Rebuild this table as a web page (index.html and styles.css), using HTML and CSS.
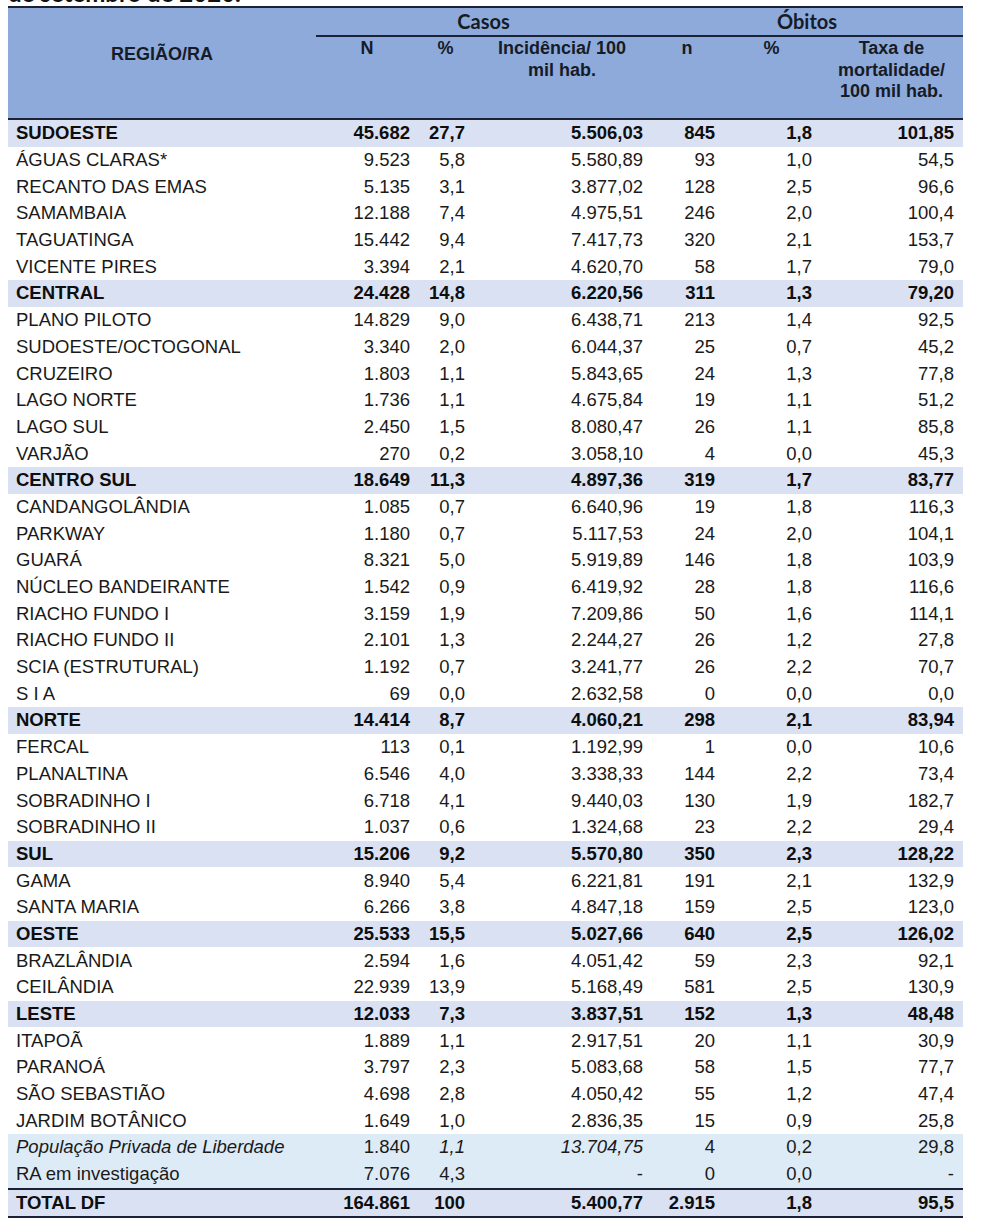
FILE: index.html
```html
<!DOCTYPE html>
<html lang="pt-BR">
<head>
<meta charset="utf-8">
<title>Casos e óbitos por região</title>
<link rel="stylesheet" href="styles.css">
</head>
<body>
<div class="caption">de setembro de 2020.</div>
<table class="tbl">
<colgroup>
<col class="c1"><col class="c2"><col class="c3"><col class="c4"><col class="c5"><col class="c6"><col class="c7">
</colgroup>
<thead>
<tr class="h1">
<th rowspan="2" class="region">REGIÃO/RA</th>
<th colspan="3" class="grp">Casos</th>
<th colspan="3" class="grp">Óbitos</th>
</tr>
<tr class="h2">
<th class="sub">N</th>
<th class="sub">%</th>
<th class="sub">Incidência/ 100<br>mil hab.</th>
<th class="sub">n</th>
<th class="sub">%</th>
<th class="sub">Taxa de<br>mortalidade/<br>100 mil hab.</th>
</tr>
</thead>
<tbody>
<tr class="r g"><td>SUDOESTE</td><td>45.682</td><td>27,7</td><td>5.506,03</td><td>845</td><td>1,8</td><td>101,85</td></tr>
<tr class="r"><td>ÁGUAS CLARAS*</td><td>9.523</td><td>5,8</td><td>5.580,89</td><td>93</td><td>1,0</td><td>54,5</td></tr>
<tr class="r"><td>RECANTO DAS EMAS</td><td>5.135</td><td>3,1</td><td>3.877,02</td><td>128</td><td>2,5</td><td>96,6</td></tr>
<tr class="r"><td>SAMAMBAIA</td><td>12.188</td><td>7,4</td><td>4.975,51</td><td>246</td><td>2,0</td><td>100,4</td></tr>
<tr class="r"><td>TAGUATINGA</td><td>15.442</td><td>9,4</td><td>7.417,73</td><td>320</td><td>2,1</td><td>153,7</td></tr>
<tr class="r"><td>VICENTE PIRES</td><td>3.394</td><td>2,1</td><td>4.620,70</td><td>58</td><td>1,7</td><td>79,0</td></tr>
<tr class="r g"><td>CENTRAL</td><td>24.428</td><td>14,8</td><td>6.220,56</td><td>311</td><td>1,3</td><td>79,20</td></tr>
<tr class="r"><td>PLANO PILOTO</td><td>14.829</td><td>9,0</td><td>6.438,71</td><td>213</td><td>1,4</td><td>92,5</td></tr>
<tr class="r"><td>SUDOESTE/OCTOGONAL</td><td>3.340</td><td>2,0</td><td>6.044,37</td><td>25</td><td>0,7</td><td>45,2</td></tr>
<tr class="r"><td>CRUZEIRO</td><td>1.803</td><td>1,1</td><td>5.843,65</td><td>24</td><td>1,3</td><td>77,8</td></tr>
<tr class="r"><td>LAGO NORTE</td><td>1.736</td><td>1,1</td><td>4.675,84</td><td>19</td><td>1,1</td><td>51,2</td></tr>
<tr class="r"><td>LAGO SUL</td><td>2.450</td><td>1,5</td><td>8.080,47</td><td>26</td><td>1,1</td><td>85,8</td></tr>
<tr class="r"><td>VARJÃO</td><td>270</td><td>0,2</td><td>3.058,10</td><td>4</td><td>0,0</td><td>45,3</td></tr>
<tr class="r g"><td>CENTRO SUL</td><td>18.649</td><td>11,3</td><td>4.897,36</td><td>319</td><td>1,7</td><td>83,77</td></tr>
<tr class="r"><td>CANDANGOLÂNDIA</td><td>1.085</td><td>0,7</td><td>6.640,96</td><td>19</td><td>1,8</td><td>116,3</td></tr>
<tr class="r"><td>PARKWAY</td><td>1.180</td><td>0,7</td><td>5.117,53</td><td>24</td><td>2,0</td><td>104,1</td></tr>
<tr class="r"><td>GUARÁ</td><td>8.321</td><td>5,0</td><td>5.919,89</td><td>146</td><td>1,8</td><td>103,9</td></tr>
<tr class="r"><td>NÚCLEO BANDEIRANTE</td><td>1.542</td><td>0,9</td><td>6.419,92</td><td>28</td><td>1,8</td><td>116,6</td></tr>
<tr class="r"><td>RIACHO FUNDO I</td><td>3.159</td><td>1,9</td><td>7.209,86</td><td>50</td><td>1,6</td><td>114,1</td></tr>
<tr class="r"><td>RIACHO FUNDO II</td><td>2.101</td><td>1,3</td><td>2.244,27</td><td>26</td><td>1,2</td><td>27,8</td></tr>
<tr class="r"><td>SCIA (ESTRUTURAL)</td><td>1.192</td><td>0,7</td><td>3.241,77</td><td>26</td><td>2,2</td><td>70,7</td></tr>
<tr class="r"><td>S I A</td><td>69</td><td>0,0</td><td>2.632,58</td><td>0</td><td>0,0</td><td>0,0</td></tr>
<tr class="r g"><td>NORTE</td><td>14.414</td><td>8,7</td><td>4.060,21</td><td>298</td><td>2,1</td><td>83,94</td></tr>
<tr class="r"><td>FERCAL</td><td>113</td><td>0,1</td><td>1.192,99</td><td>1</td><td>0,0</td><td>10,6</td></tr>
<tr class="r"><td>PLANALTINA</td><td>6.546</td><td>4,0</td><td>3.338,33</td><td>144</td><td>2,2</td><td>73,4</td></tr>
<tr class="r"><td>SOBRADINHO I</td><td>6.718</td><td>4,1</td><td>9.440,03</td><td>130</td><td>1,9</td><td>182,7</td></tr>
<tr class="r"><td>SOBRADINHO II</td><td>1.037</td><td>0,6</td><td>1.324,68</td><td>23</td><td>2,2</td><td>29,4</td></tr>
<tr class="r g"><td>SUL</td><td>15.206</td><td>9,2</td><td>5.570,80</td><td>350</td><td>2,3</td><td>128,22</td></tr>
<tr class="r"><td>GAMA</td><td>8.940</td><td>5,4</td><td>6.221,81</td><td>191</td><td>2,1</td><td>132,9</td></tr>
<tr class="r"><td>SANTA MARIA</td><td>6.266</td><td>3,8</td><td>4.847,18</td><td>159</td><td>2,5</td><td>123,0</td></tr>
<tr class="r g"><td>OESTE</td><td>25.533</td><td>15,5</td><td>5.027,66</td><td>640</td><td>2,5</td><td>126,02</td></tr>
<tr class="r"><td>BRAZLÂNDIA</td><td>2.594</td><td>1,6</td><td>4.051,42</td><td>59</td><td>2,3</td><td>92,1</td></tr>
<tr class="r"><td>CEILÂNDIA</td><td>22.939</td><td>13,9</td><td>5.168,49</td><td>581</td><td>2,5</td><td>130,9</td></tr>
<tr class="r g"><td>LESTE</td><td>12.033</td><td>7,3</td><td>3.837,51</td><td>152</td><td>1,3</td><td>48,48</td></tr>
<tr class="r"><td>ITAPOÃ</td><td>1.889</td><td>1,1</td><td>2.917,51</td><td>20</td><td>1,1</td><td>30,9</td></tr>
<tr class="r"><td>PARANOÁ</td><td>3.797</td><td>2,3</td><td>5.083,68</td><td>58</td><td>1,5</td><td>77,7</td></tr>
<tr class="r"><td>SÃO SEBASTIÃO</td><td>4.698</td><td>2,8</td><td>4.050,42</td><td>55</td><td>1,2</td><td>47,4</td></tr>
<tr class="r"><td>JARDIM BOTÂNICO</td><td>1.649</td><td>1,0</td><td>2.836,35</td><td>15</td><td>0,9</td><td>25,8</td></tr>
<tr class="r s"><td class="it">População Privada de Liberdade</td><td>1.840</td><td class="it">1,1</td><td class="it">13.704,75</td><td>4</td><td>0,2</td><td>29,8</td></tr>
<tr class="r s"><td>RA em investigação</td><td>7.076</td><td>4,3</td><td>-</td><td>0</td><td>0,0</td><td>-</td></tr>
<tr class="t"><td>TOTAL DF</td><td>164.861</td><td>100</td><td>5.400,77</td><td>2.915</td><td>1,8</td><td>95,5</td></tr>
</tbody>
</table>
</body>
</html>
```

FILE: styles.css
```css
html, body {
  margin: 0;
  padding: 0;
  background: #ffffff;
}

body {
  font-family: "Liberation Sans", Arial, sans-serif;
  color: #161616;
}

.caption {
  margin: -19px 0 0 8px;
  height: 24px;
  font-family: Lato, "Liberation Sans", sans-serif;
  font-weight: 700;
  font-size: 24px;
  line-height: 24px;
  color: #111111;
  white-space: nowrap;
}

.tbl {
  margin-left: 8px;
  margin-top: 1px;
  width: 955px;
  table-layout: fixed;
  border-collapse: separate;
  border-spacing: 0;
  font-family: "Liberation Sans", Arial, sans-serif;
  font-size: 18.5px;
}

.c1 { width: 308px; }
.c2 { width: 102px; }
.c3 { width: 55px; }
.c4 { width: 178px; }
.c5 { width: 72px; }
.c6 { width: 97px; }
.c7 { width: 143px; }

.tbl th {
  background: #8eaadb;
  color: #161b28;
  font-weight: 700;
  padding: 0;
  text-align: center;
}

.h1 { height: 31px; }
.h2 { height: 83px; }

.h1 th {
  border-top: 2px solid #1c2235;
}

.region {
  vertical-align: top;
  padding-top: 36px !important;
  font-size: 18px;
  line-height: 21px;
  border-bottom: 2px solid #1c2235;
}

.grp {
  font-family: Lato, "Liberation Sans", sans-serif;
  font-size: 20px;
  line-height: 27px;
  vertical-align: middle;
  border-bottom: 2px solid #1c2235;
}

.sub {
  vertical-align: top;
  padding-top: 1px !important;
  font-size: 18px;
  line-height: 21.5px;
  border-bottom: 2px solid #1c2235;
}

.tbl td {
  padding: 0 8px 0 0;
  text-align: right;
  vertical-align: middle;
  line-height: 20px;
  white-space: nowrap;
  color: #1a1a1a;
}

.tbl td:first-child {
  text-align: left;
  padding: 0 0 0 8px;
}

.tbl td:last-child {
  padding-right: 9px;
}

.r { height: 26.7px; }

.g td {
  background: #d9e1f2;
  font-weight: 700;
  color: #0e0e0e;
}

.s td {
  background: #ddebf7;
}

.it {
  font-style: italic;
}

.t { height: 30px; }

.t td {
  background: #d9e1f2;
  font-weight: 700;
  color: #0e0e0e;
  border-top: 2px solid #1c2235;
  border-bottom: 2px solid #1c2235;
}
```
